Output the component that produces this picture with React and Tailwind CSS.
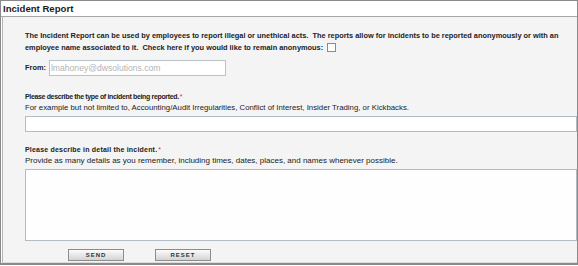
import { useState } from "react";

const Req = () => <span className="text-[#d33] text-[7px] align-top font-normal ml-[1px]">*</span>;

const Button = ({ children }) => (
  <button className="w-[56px] h-[12px] border border-[#8c8c8c] bg-gradient-to-b from-[#fbfbfb] to-[#d4d4d4] text-[6px] font-bold tracking-[1px] text-[#333] leading-none flex items-center justify-center">
    {children}
  </button>
);

export default function App() {
  const [anon, setAnon] = useState(false);

  return (
    <div className="w-[578px] h-[266px] bg-white font-['Liberation_Sans',Arial,sans-serif]">
      <div className="w-[578px] h-[265px] border border-[#8a8a8a] border-b-2 flex flex-col">
        {/* title bar */}
        <div className="h-[16px] bg-white px-[2px] flex items-center border-b border-[#a8a8a8]">
          <span className="text-[9.6px] font-bold text-[#1c1c1c] leading-none">Incident Report</span>
        </div>

        {/* body */}
        <div className="flex-1 ml-[1px] border-l border-[#b4b4b4] border-b border-b-[#dcdcdc] bg-[#f4f4f4] pl-[22px] pt-[13px]">
          <p className="text-[7.4px] leading-[12px] font-bold text-[#222] whitespace-nowrap">
            The Incident Report can be used by employees to report illegal or unethical acts.&nbsp; The reports allow for incidents to be reported anonymously or with an
            <br />
            employee name associated to it.&nbsp; Check here if you would like to remain anonymous:{" "}
            <input
              type="checkbox"
              checked={anon}
              onChange={(e) => setAnon(e.target.checked)}
              className="appearance-none w-[9px] h-[9px] border border-[#7a8ca0] bg-white align-[-2px] ml-[2px]"
            />
          </p>

          <div className="flex items-center mt-[6px] gap-[3px]">
            <span className="text-[7.4px] font-bold text-[#222]">From:</span>
            <div className="w-[177px] h-[16px] border border-[#b9c2c8] bg-white flex items-center px-[1px] text-[8.6px] text-[#b4b4b4]">
              lmahoney@dwsolutions.com
            </div>
          </div>

          <div className="mt-[15px] leading-[11px] text-[#222] whitespace-nowrap">
            <div className="text-[7px] font-bold tracking-[-0.35px]">
              Please describe the type of incident being reported.<Req />
            </div>
            <div className="text-[7.8px]">For example but not limited to, Accounting/Audit Irregularities, Conflict of Interest, Insider Trading, or Kickbacks.</div>
          </div>
          <div className="mt-[3px] h-[16px] border border-[#b2bcc4] bg-white"></div>

          <div className="mt-[12px] leading-[11px] text-[#222] whitespace-nowrap">
            <div className="text-[7px] font-bold tracking-[0.2px]">
              Please describe in detail the incident.<Req />
            </div>
            <div className="text-[8px]">Provide as many details as you remember, including times, dates, places, and names whenever possible.</div>
          </div>
          <div className="mt-[3px] h-[72px] border border-[#b2bcc4] bg-[#fefefe]"></div>

          <div className="flex gap-[31px] ml-[43px] mt-[8px]">
            <Button>SEND</Button>
            <Button>RESET</Button>
          </div>
        </div>
      </div>
    </div>
  );
}
